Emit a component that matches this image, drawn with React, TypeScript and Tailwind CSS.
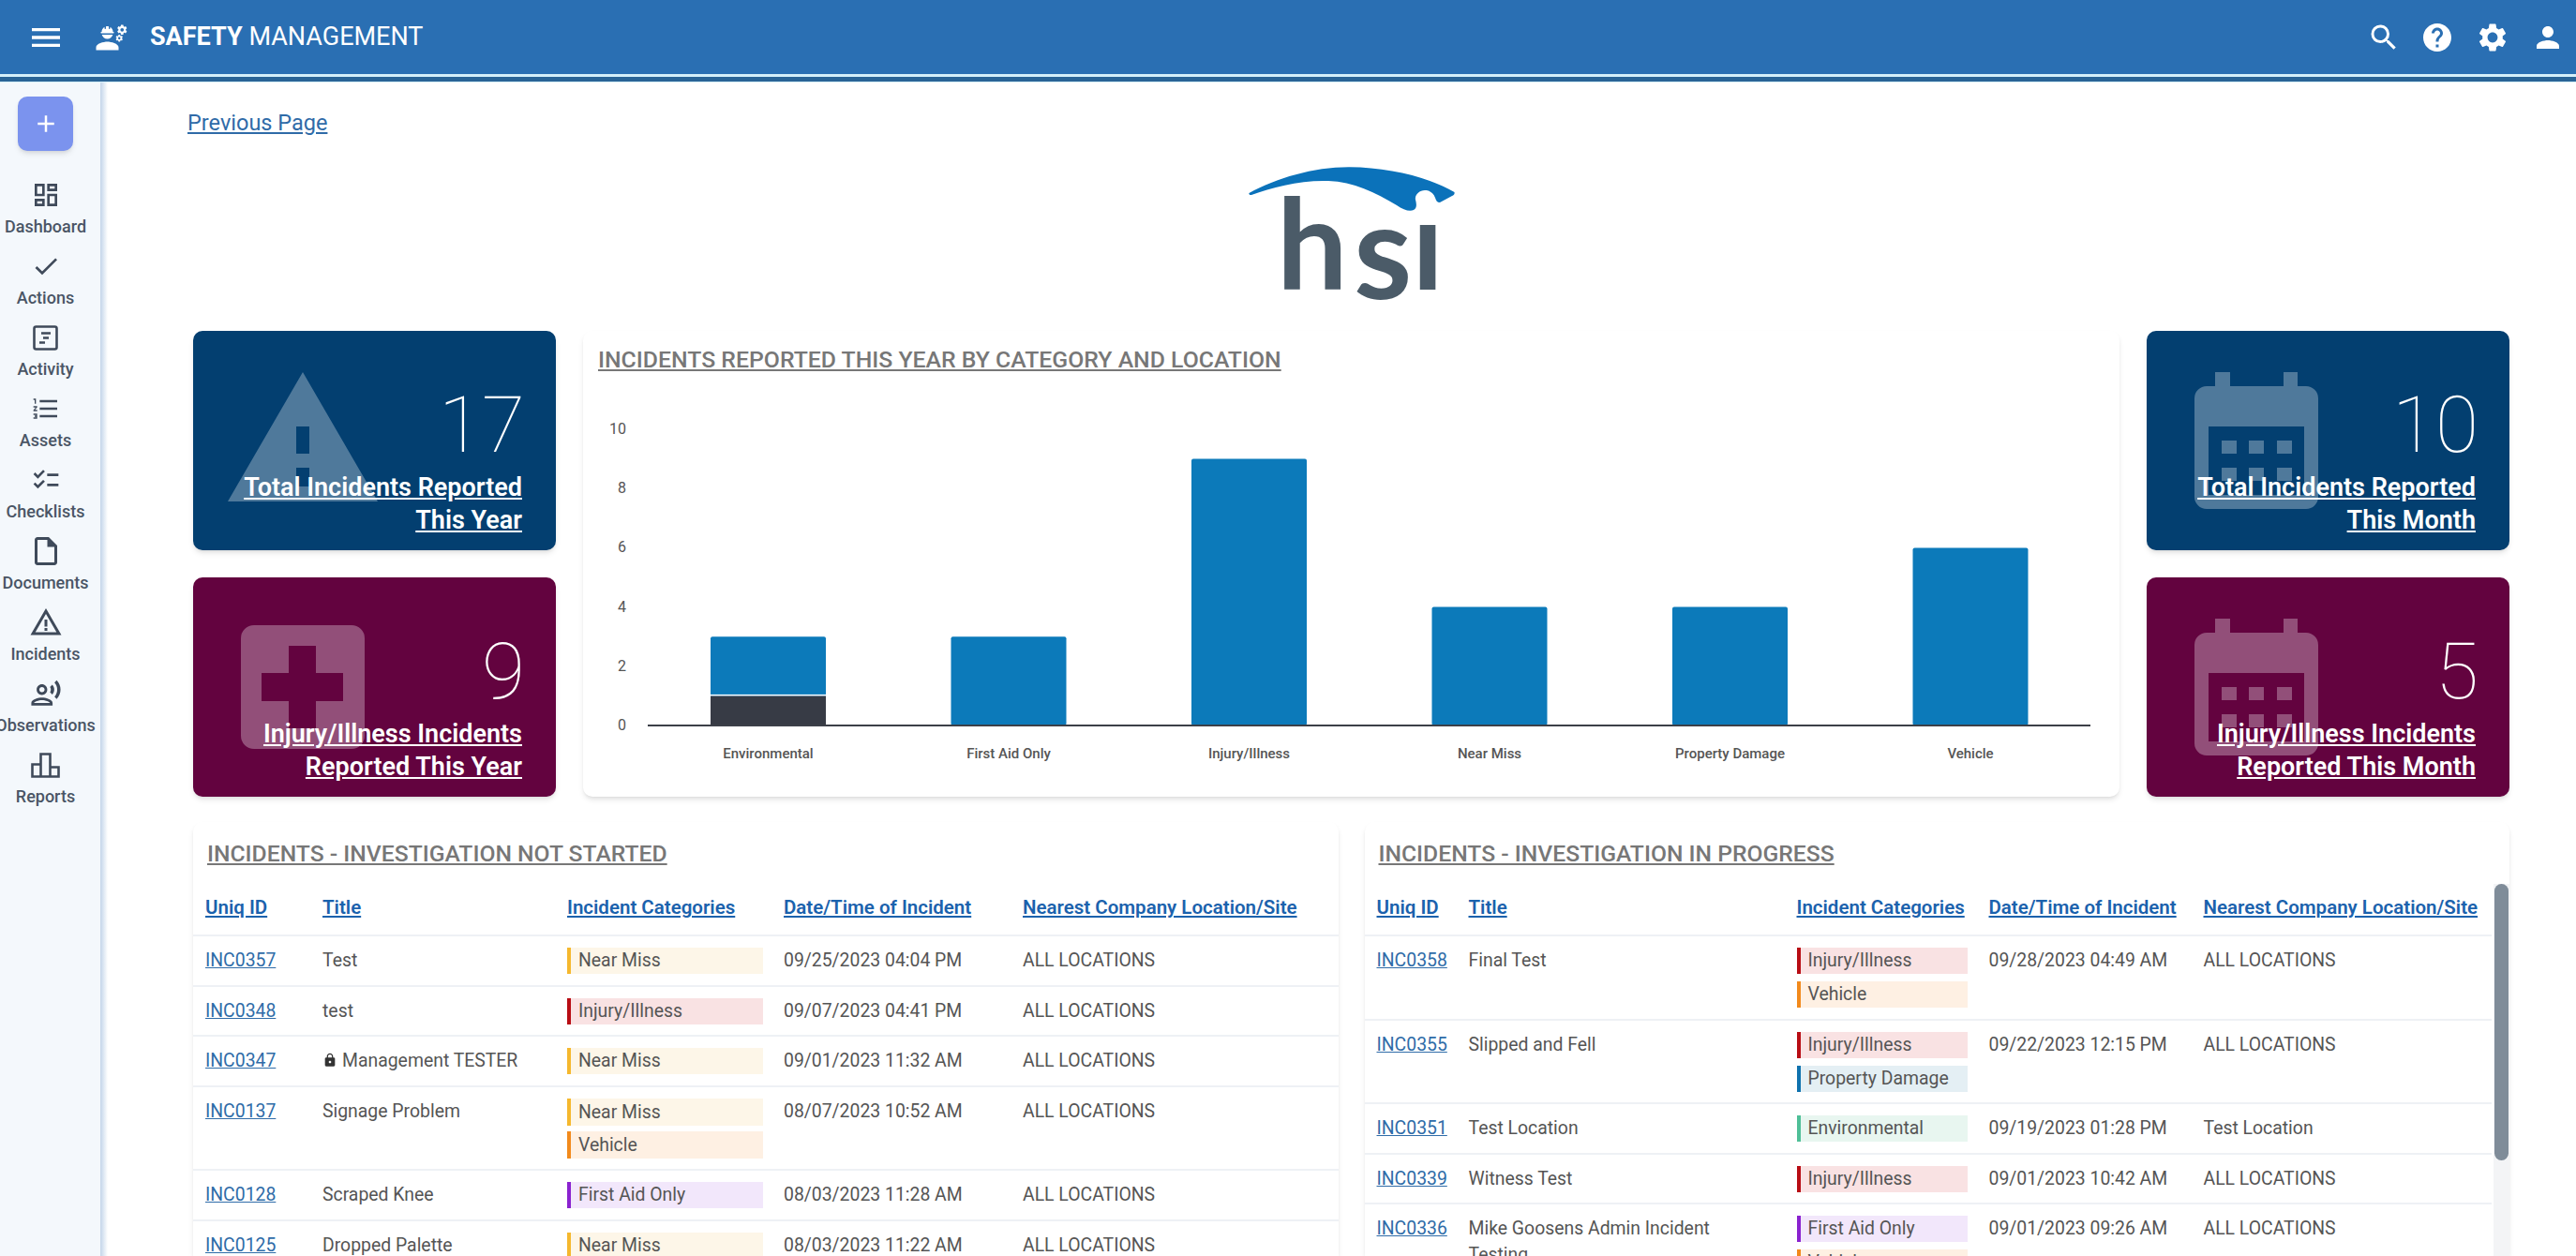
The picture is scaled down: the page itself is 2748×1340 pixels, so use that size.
import {
  MdAdd,
  MdCheck,
  MdChecklist,
  MdEngineering,
  MdFormatListNumbered,
  MdHelp,
  MdLock,
  MdMenu,
  MdOutlineDashboard,
  MdOutlineInsertDriveFile,
  MdOutlineRecordVoiceOver,
  MdPerson,
  MdSearch,
  MdSettings,
  MdWarningAmber,
} from "react-icons/md";

const ActivityIcon = () => (
  <svg width="27" height="27" viewBox="0 0 27 27" fill="none" stroke="currentColor" strokeWidth="2.6">
    <rect x="1.5" y="1.5" width="24" height="24" rx="2" />
    <path d="M9 8.5h10M11 13.5h6M7 18.5h6" />
  </svg>
);

const ReportsIcon = () => (
  <svg width="31" height="27" viewBox="0 0 31 27" fill="none" stroke="currentColor" strokeWidth="2.6">
    <path d="M1.5 25.5v-13h9v13zM10.5 25.5v-24h10v24zM20.5 25.5v-10h9v10z" />
  </svg>
);

const nav = [
  { label: "Dashboard", icon: <MdOutlineDashboard size={32} /> },
  { label: "Actions", icon: <MdCheck size={32} /> },
  { label: "Activity", icon: <ActivityIcon /> },
  { label: "Assets", icon: <MdFormatListNumbered size={32} /> },
  { label: "Checklists", icon: <MdChecklist size={32} /> },
  { label: "Documents", icon: <MdOutlineInsertDriveFile size={36} /> },
  { label: "Incidents", icon: <MdWarningAmber size={36} /> },
  { label: "Observations", icon: <MdOutlineRecordVoiceOver size={34} /> },
  { label: "Reports", icon: <ReportsIcon /> },
];

const Sidebar = () => (
  <aside className="flex shrink-0">
    <div className="w-[107px] bg-[#f4f8fc] pt-[15px] pr-[10px] flex flex-col items-center">
      <button className="w-[59px] h-[58px] rounded-[10px] bg-[#7b93ee] text-white flex items-center justify-center shadow-md">
        <MdAdd size={30} />
      </button>
      <div className="mt-[11px] w-full">
        {nav.map((item) => (
          <div key={item.label} className="h-[76px] flex flex-col items-center text-[#3f4a5a]">
            <div className="shrink-0 h-[34px] mt-[19px] flex items-center justify-center">{item.icon}</div>
            <span className="shrink-0 mt-[7px] text-[18px] leading-[20px] font-medium whitespace-nowrap text-[#4a5565]">
              {item.label}
            </span>
          </div>
        ))}
      </div>
    </div>
    <div className="w-[8px] bg-gradient-to-r from-[#c3d5e9] to-white" />
  </aside>
);

const TriangleIcon = () => (
  <svg className="absolute left-[37px] top-[44px]" width="160" height="138" viewBox="0 0 160 138" fill="#fff" fillOpacity="0.3">
    <path fillRule="evenodd" d="M80 0 160 138H0zM73 58v29h14V58zM73 102v20h14v-20z" />
  </svg>
);

const CrossIcon = () => (
  <svg className="absolute left-[51px] top-[51px]" width="132" height="132" viewBox="0 0 132 132" fill="#fff" fillOpacity="0.3">
    <path
      fillRule="evenodd"
      d="M14 0h104a14 14 0 0 1 14 14v104a14 14 0 0 1-14 14H14a14 14 0 0 1-14-14V14A14 14 0 0 1 14 0zM51 22v29H22v30h29v29h29V81h29V51H80V22z"
    />
  </svg>
);

const CalendarIcon = () => (
  <svg className="absolute left-[51px] top-[44px]" width="132" height="146" viewBox="0 0 132 146" fill="#fff" fillOpacity="0.3">
    <path
      fillRule="evenodd"
      d="M22 0h16v15h57V0h15v15h9a13 13 0 0 1 13 13v105a13 13 0 0 1-13 13H13a13 13 0 0 1-13-13V28a13 13 0 0 1 13-13h9zM15 58v73h102V58zM29 73v14h16V73zM58 73v14h16V73zM88 73v14h16V73zM29 102v14h16v-14zM58 102v14h16v-14zM88 102v14h16v-14z"
    />
  </svg>
);

const KpiCard = ({ value, lines, color, icon }: { value: string; lines: string[]; color: string; icon: React.ReactNode }) => (
  <div className={`relative h-[234px] rounded-[10px] overflow-hidden shadow-md text-white ${color}`}>
    {icon}
    <div className="relative flex flex-col items-end pt-[56px] pr-[36px]">
      <div className="-mr-[3px] text-[84px] leading-[90px] font-thin">{value}</div>
      <div className="mt-[4px] text-right text-[27px] leading-[35px] font-semibold underline">
        {lines.map((l) => (
          <div key={l}>{l}</div>
        ))}
      </div>
    </div>
  </div>
);

const ticks = [0, 2, 4, 6, 8, 10];
const bars = [
  { label: "Environmental", value: 3, dark: 1 },
  { label: "First Aid Only", value: 3, dark: 0 },
  { label: "Injury/Illness", value: 9, dark: 0 },
  { label: "Near Miss", value: 4, dark: 0 },
  { label: "Property Damage", value: 4, dark: 0 },
  { label: "Vehicle", value: 6, dark: 0 },
];

const Chart = () => (
  <div className="rounded-[10px] bg-white shadow-md overflow-hidden">
    <div className="pl-[16px] pt-[15px] h-[65px] text-[24.8px] leading-[32px] font-medium text-[#777] underline">
      INCIDENTS REPORTED THIS YEAR BY CATEGORY AND LOCATION
    </div>
    <svg width="1639" height="432" viewBox="0 0 1639 432">
      {ticks.map((t) => (
        <text key={t} x="46" y={356 - t * 31.6 + 5} textAnchor="end" fontSize="16" fill="#555" fontFamily="Roboto, sans-serif">
          {t}
        </text>
      ))}
      {bars.map((b, i) => {
        const x = 136 + i * 256.5;
        return (
          <g key={b.label}>
            <rect x={x} y={356 - b.value * 31.6} width="123" height={b.value * 31.6} rx="2" fill="#0c7aba" />
            {b.dark > 0 && <rect x={x} y={356 - b.dark * 31.6} width="123" height={b.dark * 31.6} fill="#373b45" />}
            {b.dark > 0 && <rect x={x} y={356 - b.dark * 31.6 - 1.5} width="123" height="1.5" fill="#fff" />}
            <text x={x + 61.5} y="391" textAnchor="middle" fontSize="15" fill="#555" fontWeight="500" fontFamily="Roboto, sans-serif">
              {b.label}
            </text>
          </g>
        );
      })}
      <rect x="69" y="355" width="1539" height="2" fill="#3c4048" />
    </svg>
  </div>
);

const tagStyles: Record<string, string> = {
  "Near Miss": "bg-[#fdf6e8] border-[#f5b82e]",
  "Injury/Illness": "bg-[#f9e2e3] border-[#b80d14]",
  Vehicle: "bg-[#fef0e3] border-[#f28a1c]",
  "First Aid Only": "bg-[#f2e7fb] border-[#8a22cf]",
  "Property Damage": "bg-[#e4eff4] border-[#0f72ae]",
  Environmental: "bg-[#e8f6f0] border-[#4fbf97]",
};

interface Row {
  id: string;
  title: string;
  locked?: boolean;
  tall?: boolean;
  tags: string[];
  date: string;
  site: string;
}

const leftRows: Row[] = [
  { id: "INC0357", title: "Test", tags: ["Near Miss"], date: "09/25/2023 04:04 PM", site: "ALL LOCATIONS" },
  { id: "INC0348", title: "test", tags: ["Injury/Illness"], date: "09/07/2023 04:41 PM", site: "ALL LOCATIONS" },
  { id: "INC0347", title: "Management TESTER", locked: true, tags: ["Near Miss"], date: "09/01/2023 11:32 AM", site: "ALL LOCATIONS" },
  { id: "INC0137", title: "Signage Problem", tall: true, tags: ["Near Miss", "Vehicle"], date: "08/07/2023 10:52 AM", site: "ALL LOCATIONS" },
  { id: "INC0128", title: "Scraped Knee", tags: ["First Aid Only"], date: "08/03/2023 11:28 AM", site: "ALL LOCATIONS" },
  { id: "INC0125", title: "Dropped Palette", tags: ["Near Miss"], date: "08/03/2023 11:22 AM", site: "ALL LOCATIONS" },
];

const rightRows: Row[] = [
  { id: "INC0358", title: "Final Test", tags: ["Injury/Illness", "Vehicle"], date: "09/28/2023 04:49 AM", site: "ALL LOCATIONS" },
  { id: "INC0355", title: "Slipped and Fell", tags: ["Injury/Illness", "Property Damage"], date: "09/22/2023 12:15 PM", site: "ALL LOCATIONS" },
  { id: "INC0351", title: "Test Location", tags: ["Environmental"], date: "09/19/2023 01:28 PM", site: "Test Location" },
  { id: "INC0339", title: "Witness Test", tags: ["Injury/Illness"], date: "09/01/2023 10:42 AM", site: "ALL LOCATIONS" },
  { id: "INC0336", title: "Mike Goosens Admin Incident Testing", tags: ["First Aid Only", "Vehicle"], date: "09/01/2023 09:26 AM", site: "ALL LOCATIONS" },
];

const IncidentTable = ({ rows, widths, tagPad }: { rows: Row[]; widths: number[]; tagPad: string }) => (
  <table className="table-fixed border-collapse" style={{ width: widths.reduce((a, b) => a + b, 0) }}>
    <colgroup>
      {widths.map((w, i) => (
        <col key={i} style={{ width: w }} />
      ))}
    </colgroup>
    <thead>
      <tr className="h-[58px] border-b-2 border-[#eef1f5] text-left text-[20.5px] font-semibold text-[#1b62ad] underline">
        {["Uniq ID", "Title", "Incident Categories", "Date/Time of Incident", "Nearest Company Location/Site"].map((h) => (
          <th key={h} className="pl-[13px] font-semibold whitespace-nowrap">
            {h}
          </th>
        ))}
      </tr>
    </thead>
    <tbody className="text-[19.4px] leading-[28px] text-[#555] align-top">
      {rows.map((r) => (
        <tr key={r.id} className="border-b-2 border-[#eef1f5]">
          <td className="pl-[13px] pt-[12px] pb-[11.5px] text-[#2f6ca8] underline">{r.id}</td>
          <td className="pl-[13px] pr-[30px] pt-[12px] pb-[11.5px]">
            {r.locked && <MdLock size={16} className="inline mr-[5px] mb-[3px] text-[#333]" />}
            {r.title}
          </td>
          <td className={`pl-[13px] pt-[12px] pb-[11.5px] ${tagPad}`}>
            <div className={r.tall ? "flex flex-col gap-[6px]" : "flex flex-col gap-[8px]"}>
              {r.tags.map((t) => (
                <div
                  key={t}
                  className={`${r.tall ? "h-[29px] leading-[29px]" : "h-[28px]"} border-l-4 pl-[8px] whitespace-nowrap ${tagStyles[t]}`}
                >
                  {t}
                </div>
              ))}
            </div>
          </td>
          <td className="pl-[13px] pt-[12px] pb-[11.5px] whitespace-nowrap">{r.date}</td>
          <td className="pl-[13px] pt-[12px] pb-[11.5px] whitespace-nowrap">{r.site}</td>
        </tr>
      ))}
    </tbody>
  </table>
);

const TableCard = ({ title, children, scroll }: { title: string; children: React.ReactNode; scroll?: boolean }) => (
  <div className="relative rounded-t-[10px] bg-white shadow-md h-[463px] overflow-hidden">
    <div className="pl-[15px] pt-[18px] h-[63px] text-[24.7px] leading-[32px] font-medium text-[#777] underline">{title}</div>
    {children}
    {scroll && (
      <div className="absolute right-0 top-[66px] bottom-0 w-[17px] bg-[#f3f4f6] px-[1px]">
        <div className="h-[295px] w-[15px] rounded-full bg-[#7f8c99]" />
      </div>
    )}
  </div>
);

export default function App() {
  return (
    <div className="h-screen overflow-hidden flex flex-col bg-white font-['Roboto',sans-serif]">
      <header className="shrink-0">
        <div className="h-[79px] bg-[#2a6fb3] flex items-center justify-between text-white pl-[29px] pr-[12px]">
          <div className="flex items-center">
            <MdMenu size={40} />
            <MdEngineering size={36} className="ml-[32px]" />
            <div className="ml-[23px] text-[27px] font-normal">
              <span className="font-bold">SAFETY</span> MANAGEMENT
            </div>
          </div>
          <div className="flex items-center gap-[23px]">
            <MdSearch size={36} className="translate-x-[2px]" />
            <MdHelp size={36} />
            <MdSettings size={36} />
            <MdPerson size={36} />
          </div>
        </div>
        <div className="h-[9px] bg-[#2a6496] border-t-[3px] border-b border-t-[#d5effa] border-b-[#d5effa]" />
      </header>
      <div className="flex-1 flex min-h-0">
        <Sidebar />
        <main className="flex-1 min-w-0 pl-[91px] pr-[71px] pt-[29px]">
          <a className="block -ml-[6px] text-[23.5px] leading-[28px] text-[#2f6ba8] underline">Previous Page</a>
          <div className="mt-[33px] flex justify-center">
            <svg className="overflow-visible" width="220" height="145" viewBox="0 0 220 145">
              <path
                fill="#0b72ba"
                d="M0.5 28C30 12 70 0 108 0.3C150 0.5 195 12 219.5 27C220 29 219 30 217 31L204 38C201 38 200 36 199 33C197 27 192 25 188 25C182 25 177 30 178 35C179 39 180 44 176 46C172 48 165 46 158 41C135 27 112 16 85 15C55 14 25 22 3 30C1 30.5 0 29 0.5 28Z"
              />
              <text y="131" fontSize="134" fontWeight="700" fill="#4b5b68" fontFamily="Lato, sans-serif">
                <tspan x="30">h</tspan>
                <tspan x="112" dy="10" fontSize="142">s</tspan>
                <tspan x="174" dy="-10">ı</tspan>
              </text>
            </svg>
          </div>
          <div className="mt-[30px] grid grid-cols-[387px_1fr_387px] gap-x-[29px]">
            <div className="flex flex-col gap-[29px]">
              <KpiCard value="17" lines={["Total Incidents Reported", "This Year"]} color="bg-[#033f70]" icon={<TriangleIcon />} />
              <KpiCard value="9" lines={["Injury/Illness Incidents", "Reported This Year"]} color="bg-[#63033f]" icon={<CrossIcon />} />
            </div>
            <Chart />
            <div className="flex flex-col gap-[29px]">
              <KpiCard value="10" lines={["Total Incidents Reported", "This Month"]} color="bg-[#033f70]" icon={<CalendarIcon />} />
              <KpiCard value="5" lines={["Injury/Illness Incidents", "Reported This Month"]} color="bg-[#63033f]" icon={<CalendarIcon />} />
            </div>
          </div>
          <div className="mt-[27px] grid grid-cols-2 gap-x-[28px]">
            <TableCard title="INCIDENTS - INVESTIGATION NOT STARTED">
              <IncidentTable rows={leftRows} widths={[125, 261, 231, 255, 350]} tagPad="pr-[9px]" />
            </TableCard>
            <TableCard title="INCIDENTS - INVESTIGATION IN PROGRESS" scroll>
              <IncidentTable rows={rightRows} widths={[98, 350, 205, 229, 320]} tagPad="pr-[10px]" />
            </TableCard>
          </div>
        </main>
      </div>
    </div>
  );
}
